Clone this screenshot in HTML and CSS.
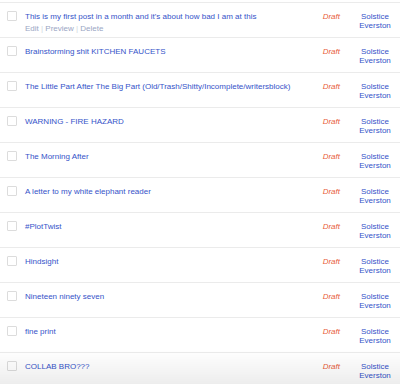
FILE: index.html
```html
<!DOCTYPE html>
<html lang="en">

<head>
    <meta charset="UTF-8">
    <title>Posts</title>
    <link rel="stylesheet" href="styles.css">
</head>

<body>
    <div class="post-list">
        <div class="post-row">
            <span class="check"></span>
            <div class="post-main">
                <a class="post-title">This is my first post in a month and it's about how bad I am at this</a>
                <div class="post-actions">Edit <span class="sep">|</span> Preview <span class="sep">|</span> Delete</div>
            </div>
            <span class="status">Draft</span>
            <span class="author">Solstice Everston</span>
        </div>
        <div class="post-row">
            <span class="check"></span>
            <div class="post-main"><a class="post-title">Brainstorming shit KITCHEN FAUCETS</a></div>
            <span class="status">Draft</span>
            <span class="author">Solstice Everston</span>
        </div>
        <div class="post-row">
            <span class="check"></span>
            <div class="post-main"><a class="post-title">The Little Part After The Big Part (Old/Trash/Shitty/Incomplete/writersblock)</a></div>
            <span class="status">Draft</span>
            <span class="author">Solstice Everston</span>
        </div>
        <div class="post-row">
            <span class="check"></span>
            <div class="post-main"><a class="post-title">WARNING - FIRE HAZARD</a></div>
            <span class="status">Draft</span>
            <span class="author">Solstice Everston</span>
        </div>
        <div class="post-row">
            <span class="check"></span>
            <div class="post-main"><a class="post-title">The Morning After</a></div>
            <span class="status">Draft</span>
            <span class="author">Solstice Everston</span>
        </div>
        <div class="post-row">
            <span class="check"></span>
            <div class="post-main"><a class="post-title">A letter to my white elephant reader</a></div>
            <span class="status">Draft</span>
            <span class="author">Solstice Everston</span>
        </div>
        <div class="post-row">
            <span class="check"></span>
            <div class="post-main"><a class="post-title">#PlotTwist</a></div>
            <span class="status">Draft</span>
            <span class="author">Solstice Everston</span>
        </div>
        <div class="post-row">
            <span class="check"></span>
            <div class="post-main"><a class="post-title">Hindsight</a></div>
            <span class="status">Draft</span>
            <span class="author">Solstice Everston</span>
        </div>
        <div class="post-row">
            <span class="check"></span>
            <div class="post-main"><a class="post-title">Nineteen ninety seven</a></div>
            <span class="status">Draft</span>
            <span class="author">Solstice Everston</span>
        </div>
        <div class="post-row">
            <span class="check"></span>
            <div class="post-main"><a class="post-title">fine print</a></div>
            <span class="status">Draft</span>
            <span class="author">Solstice Everston</span>
        </div>
        <div class="post-row">
            <span class="check"></span>
            <div class="post-main"><a class="post-title">COLLAB BRO???</a></div>
            <span class="status">Draft</span>
            <span class="author">Solstice Everston</span>
        </div>
    </div>

    <div class="bottom-fade"></div>
</body>

</html>
```

FILE: styles.css
```css
* {
    margin: 0;
    padding: 0;
    box-sizing: border-box;
    font-family: 'Liberation Sans', Arial, sans-serif;
}

body {
    background: #fff;
    overflow: hidden;
}

.post-list {
    margin-top: 2px;
    border-top: 1px solid #ebebeb;
}

.post-row {
    display: flex;
    align-items: flex-start;
    height: 35px;
    border-bottom: 1px solid #ebebeb;
    font-size: 8px;
}

.check {
    flex: none;
    width: 10px;
    height: 10px;
    margin: 8px 8px 0 7px;
    border: 1px solid #dcdcdc;
    border-radius: 1px;
    background: #fff;
}

.post-main {
    flex: 1;
    padding-top: 8px;
    min-width: 0;
}

.post-title {
    display: block;
    color: #3553c9;
    line-height: 11px;
    white-space: nowrap;
}

.post-actions {
    margin-top: 1px;
    color: #9aa6c4;
    line-height: 11px;
}

.post-actions .sep {
    color: #d2d6e0;
}

.status {
    flex: none;
    width: 40px;
    margin-right: 10px;
    padding-top: 8px;
    text-align: right;
    color: #e8603c;
    font-style: italic;
    line-height: 11px;
}

.author {
    flex: none;
    width: 50px;
    padding-top: 9px;
    text-align: center;
    color: #3553c9;
    line-height: 9px;
}

.bottom-fade {
    position: fixed;
    left: 0;
    right: 0;
    bottom: 0;
    height: 34px;
    background: linear-gradient(to bottom, rgba(0, 0, 0, 0), rgba(0, 0, 0, 0.07));
    pointer-events: none;
}
```
